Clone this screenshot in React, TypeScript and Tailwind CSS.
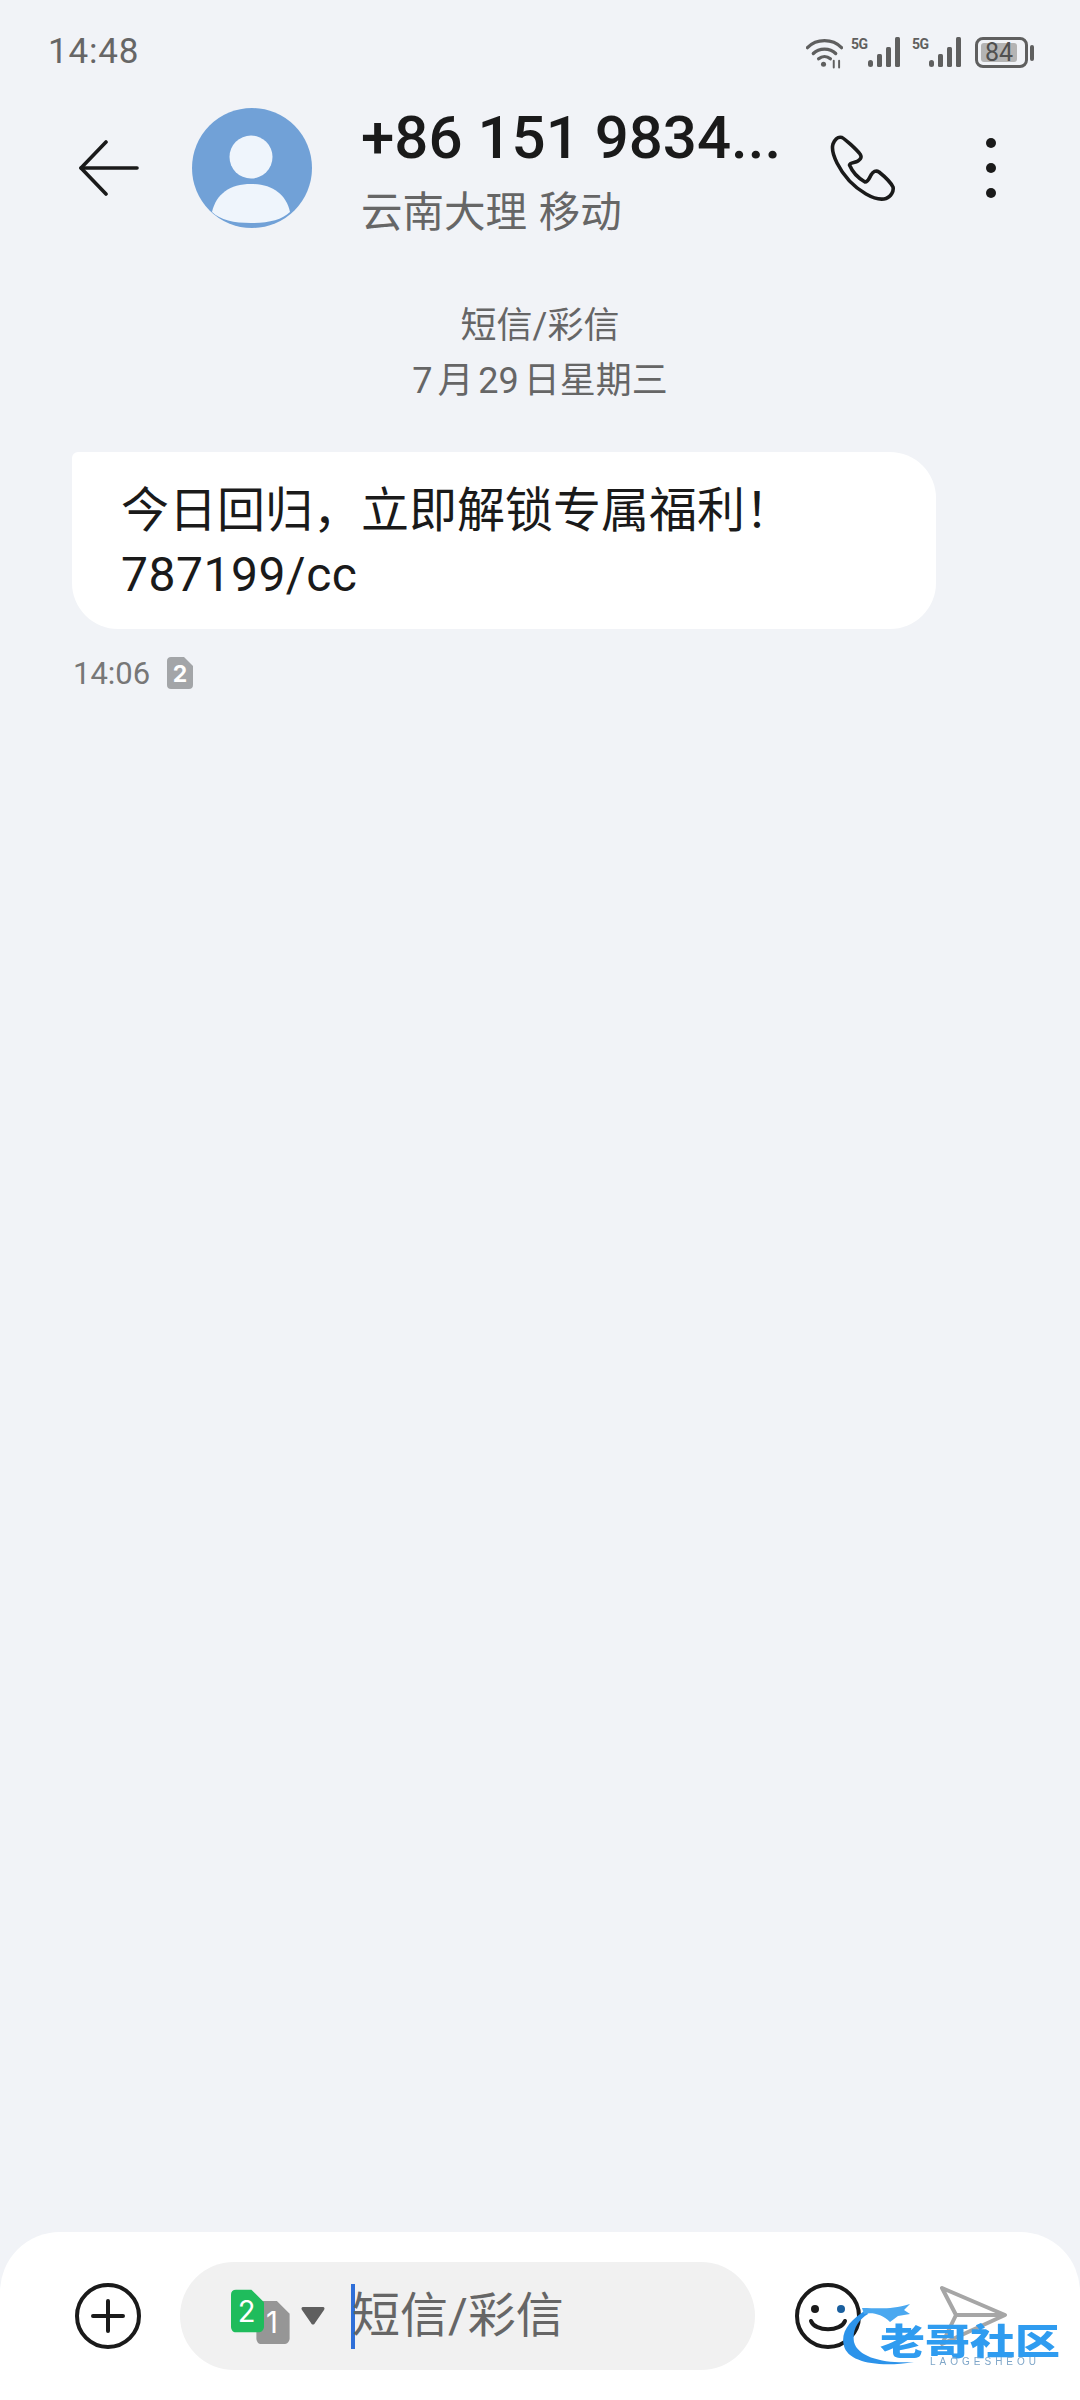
const CJK = "font-['Inter','Noto_Sans_CJK_SC',sans-serif]";

function SignalBars() {
  return (
    <svg width="33" height="30" viewBox="0 0 33 30" fill="#5f5f5f" className="shrink-0">
      <rect x="0" y="23" width="5" height="7" rx="2.5" />
      <rect x="9" y="17" width="5" height="13" rx="1.5" />
      <rect x="18" y="10" width="5" height="20" rx="1.5" />
      <rect x="27" y="0" width="5" height="30" rx="1.5" />
    </svg>
  );
}

function StatusIcons() {
  return (
    <div className="flex items-start text-[#5f5f5f]">
      {/* wifi */}
      <svg width="37" height="32" viewBox="0 0 38 32" fill="none" stroke="#5f5f5f" strokeWidth="3.4" strokeLinecap="round" className="shrink-0">
        <path d="M1.5 10.5C11 1 27 1 36.500 10.500" />
        <path d="M7.500 16.500C13.500 10.500 24.500 10.500 30.500 16.500" />
        <path d="M13 22C16.500 19 21.500 19 25 22" />
        <circle cx="18" cy="27.500" r="2.600" fill="#5f5f5f" stroke="none" />
        <path d="M28.500 24V31M34 24V31" strokeWidth="2" />
      </svg>
      <span className="ml-[8px] w-[17px] font-['Roboto',sans-serif] font-bold text-[14px] leading-[14px] tracking-[-0.5px]">5G</span>
      <SignalBars />
      <span className="ml-[11px] w-[17px] font-['Roboto',sans-serif] font-bold text-[14px] leading-[14px] tracking-[-0.5px]">5G</span>
      <SignalBars />
      <div className="ml-[13px] flex items-center">
        <div className="w-[53px] h-[31px] rounded-[8px] border-[3px] border-[#5f5f5f] p-[3px] flex">
          <div className="w-[36px] h-full bg-[#b4b4b4] rounded-[3px] flex items-center justify-center font-['Roboto',sans-serif] text-[25px] leading-none text-[#505050]">
            84
          </div>
        </div>
        <div className="ml-[2px] w-[4px] h-[16px] bg-[#5f5f5f] rounded-full" />
      </div>
    </div>
  );
}

function Avatar() {
  return (
    <svg width="120" height="120" viewBox="0 0 120 120" className="shrink-0">
      <defs>
        <clipPath id="av">
          <circle cx="60" cy="60" r="60" />
        </clipPath>
      </defs>
      <circle cx="60" cy="60" r="60" fill="#71a1d7" />
      <g clipPath="url(#av)">
        <circle cx="59" cy="49" r="21.500" fill="#eff5fc" />
        <path d="M20 104C24 86 38 76 59 76C80 76 94 86 98 104C90 112 76 115 59 115C42 115 28 112 20 104Z" fill="#eff5fc" />
      </g>
    </svg>
  );
}

function Sim({ n, bg, className }: { n: string; bg: string; className: string }) {
  return (
    <svg viewBox="0 0 34 44" className={className}>
      <path d="M5 0H21L34 13V38C34 41.500 31.500 44 28 44H5C2 44 0 41.500 0 38V5C0 2 2 0 5 0Z" fill={bg} />
      <text x="16" y="33" textAnchor="middle" fontSize="30" fill="#fff" fontFamily="Inter, sans-serif">
        {n}
      </text>
    </svg>
  );
}

export default function App() {
  return (
    <div className={`w-[1080px] h-[2400px] bg-[#f1f3f7] flex flex-col overflow-hidden ${CJK}`}>
      {/* status bar */}
      <div className="h-[108px] shrink-0 pl-[48px] pr-[46px] pt-[37px] flex items-start justify-between">
        <span className="text-[35px] leading-[30px] text-[#666] tracking-[0.8px] font-['Roboto',sans-serif]">14:48</span>
        <StatusIcons />
      </div>

      {/* header */}
      <div className="h-[120px] shrink-0 flex items-center pl-[79px]">
        <svg width="60" height="56" viewBox="0 0 60 56" fill="none" stroke="#1a1a1a" strokeWidth="3.6" strokeLinecap="round" strokeLinejoin="round" className="shrink-0">
          <path d="M27 2L2 28L27 54" />
          <path d="M2 28H58" />
        </svg>
        <div className="ml-[53px]">
          <Avatar />
        </div>
        <div className="ml-[49px] w-[421px] h-[120px] shrink-0">
          <div className="text-[60px] leading-[60px] font-medium text-[#1a1a1a] whitespace-nowrap font-['Roboto',sans-serif]">
            +86 151 9834...
          </div>
          <div className="mt-[19px] text-[41.5px] leading-[50px] text-[#666] whitespace-nowrap">云南大理 移动</div>
        </div>
        <svg width="66" height="66" viewBox="0 0 66 66" fill="none" stroke="#1a1a1a" strokeWidth="3.6" strokeLinejoin="round" className="ml-[48px] shrink-0">
          <path d="M3 9C5 4 8 1.500 12 2.500C15 4 26 14 30 19C32 22 31 24 28 26C25 28 20 27 19.500 30C22 36 28 43 35 47C38 47 39.500 43 41 40C43 36.500 46 35 49 37C54 41 61 48 63 52C64 56 61 62 56 63.500C51 65 43 63 36 59C24 52 13 40 7 28C3 20 1.500 14 3 9Z" />
        </svg>
        <div className="ml-[90px] flex flex-col gap-[15px] shrink-0">
          <div className="w-[10px] h-[10px] rounded-full bg-[#1a1a1a]" />
          <div className="w-[10px] h-[10px] rounded-full bg-[#1a1a1a]" />
          <div className="w-[10px] h-[10px] rounded-full bg-[#1a1a1a]" />
        </div>
      </div>

      {/* date */}
      <div className="mt-[71px] text-center text-[36px] leading-[55px] text-[#666] font-['Roboto','Noto_Sans_CJK_SC',sans-serif]">
        <div>短信/彩信</div>
        <div className="[word-spacing:-4px]">7 月 29 日星期三</div>
      </div>

      {/* message */}
      <div className="mt-[43px] ml-[72px] w-[864px] h-[177px] bg-white rounded-[46px] rounded-tl-[6px] pl-[49px] pt-[27px] text-[48px] leading-[64px] text-[#1a1a1a] font-['Roboto','Noto_Sans_CJK_SC',sans-serif]">
        <div className="whitespace-nowrap">今日回归，立即解锁专属福利！</div>
        <div className="tracking-[0.5px]">787199/cc</div>
      </div>
      <div className="mt-[28px] ml-[73px] flex items-center h-[32px]">
        <span className="text-[31px] leading-none text-[#777] font-['Roboto',sans-serif]">14:06</span>
        <svg width="26" height="32" viewBox="0 0 26 32" className="ml-[17px]">
          <path d="M4 0H17L26 9V28C26 30.500 24.500 32 22 32H4C1.500 32 0 30.500 0 28V4C0 1.500 1.500 0 4 0Z" fill="#a3a5a8" />
          <text x="13" y="25" textAnchor="middle" fontSize="23" fontWeight="700" fill="#fff" fontFamily="Inter, sans-serif">
            2
          </text>
        </svg>
      </div>

      {/* input bar */}
      <div className="relative mt-auto h-[168px] bg-white rounded-t-[60px] pt-[30px] flex items-start">
        <svg width="66" height="66" viewBox="0 0 66 66" fill="none" stroke="#1a1a1a" strokeWidth="4" strokeLinecap="round" className="ml-[75px] mt-[21px] shrink-0">
          <circle cx="33" cy="33" r="31" />
          <path d="M33 18V48M18 33H48" />
        </svg>
        <div className="ml-[39px] w-[575px] h-[108px] rounded-[54px] bg-[#f1f1f1] flex items-center shrink-0">
          <div className="relative ml-[51px] w-[60px] h-[55px] shrink-0">
            <Sim n="1" bg="#969696" className="absolute left-[24px] top-[12px] w-[36px] h-[43px]" />
            <Sim n="2" bg="#1fbc5c" className="absolute left-0 top-0 w-[33px] h-[44px]" />
          </div>
          <svg width="24" height="18" viewBox="0 0 24 18" className="ml-[10px] shrink-0">
            <path d="M2 0H22C23.500 0 24 1.500 23 3L14 16C13 18 11 18 10 16L1 3C0 1.500 .5 0 2 0Z" fill="#5f5f5f" />
          </svg>
          <div className="ml-[26px] w-[4px] h-[65px] bg-[#2f6fd8] shrink-0" />
          <span className="-ml-[3px] text-[48px] leading-none text-[#666] whitespace-nowrap font-['Roboto','Noto_Sans_CJK_SC',sans-serif]">短信/彩信</span>
        </div>
        <svg width="66" height="66" viewBox="0 0 66 66" fill="none" stroke="#1a1a1a" strokeWidth="4" strokeLinecap="round" className="ml-[40px] mt-[21px] shrink-0">
          <circle cx="33" cy="33" r="31" />
          <circle cx="20" cy="26" r="4" fill="#1a1a1a" stroke="none" />
          <circle cx="46" cy="26" r="4" fill="#1a5f9e" stroke="none" />
          <path d="M16 38C20 49 46 49 50 38" />
        </svg>
        <svg width="68" height="60" viewBox="0 0 68 60" fill="none" stroke="#a6a6a6" strokeWidth="4" strokeLinejoin="round" className="ml-[79px] mt-[24px] shrink-0">
          <path d="M2 2L65 29L2 58L16 29Z" />
          <path d="M16 29H65" />
        </svg>

        {/* watermark */}
        <div className="absolute left-[838px] top-[52px] w-[242px] h-[116px] blur-[0.7px]">
          <svg width="110" height="100" viewBox="0 0 110 100" fill="none" className="absolute left-0 top-0">
            <path d="M28 26C12 36 2 48 6 62C10 78 40 84 76 78C48 80 20 74 16 58C14 46 20 36 30 30Z" fill="#2c93ea" />
            <path d="M24 24C40 24 52 26 72 20L66 26L72 30L60 32L52 38C44 30 34 28 26 30Z" fill="#4aa8f0" />
          </svg>
          <div className="absolute left-[42px] top-[40px] text-[36px] leading-[30px] font-black text-[#2f9cf0] whitespace-nowrap scale-x-125 origin-left font-['Noto_Sans_CJK_SC',sans-serif]">
            老哥社区
          </div>
          <div className="absolute left-[92px] top-[72px] text-[10px] leading-[12px] text-[#7fa6c8] tracking-[4px] whitespace-nowrap font-['Liberation_Sans',sans-serif]">
            LAOGESHEOU
          </div>
        </div>
      </div>
    </div>
  );
}
